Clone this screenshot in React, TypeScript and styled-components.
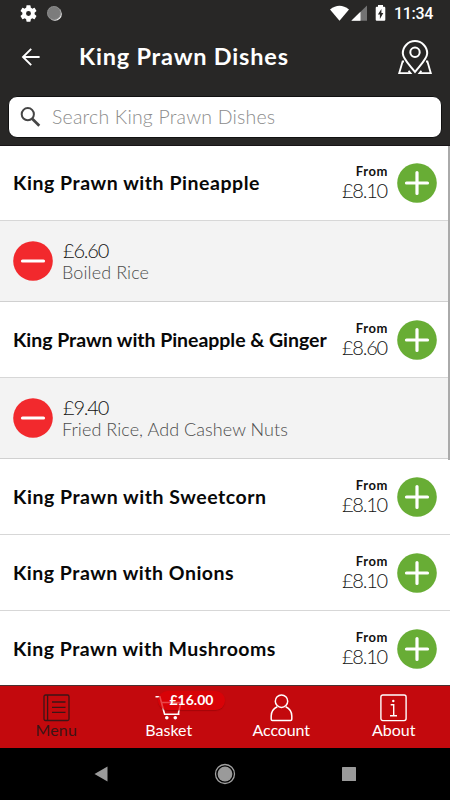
import React from "react";
import styled, { createGlobalStyle } from "styled-components";

const GlobalStyle = createGlobalStyle`
  *, *::before, *::after { box-sizing: border-box; }
  body { margin: 0; background: #000; font-family: Lato, "Open Sans", sans-serif; }
  svg { display: block; flex: none; }
`;

const Screen = styled.div`
  width: 450px;
  height: 800px;
  display: flex;
  flex-direction: column;
  overflow: hidden;
  background: #fff;
`;

const Header = styled.header`
  height: 146px;
  flex: none;
  background: #282726;
  border-bottom: 1px solid #181417;
  color: #fff;
`;

const StatusBar = styled.div`
  height: 27px;
  padding: 0 17px 0 20px;
  display: flex;
  align-items: center;
  justify-content: space-between;
`;

const StatusGroup = styled.div`
  display: flex;
  align-items: center;
`;

const Clock = styled.span`
  margin-left: 8px;
  padding-top: 1px;
  font: 500 16px/26px Roboto, sans-serif;
  letter-spacing: -0.3px;
`;

const TitleBar = styled.div`
  height: 60px;
  padding: 0 17px 0 21px;
  display: flex;
  align-items: center;
`;

const Title = styled.h1`
  margin: 0 auto 0 39px;
  padding-bottom: 2px;
  font-size: 23.5px;
  line-height: 30px;
  font-weight: 700;
  letter-spacing: 0.8px;
  white-space: nowrap;
`;

const SearchBox = styled.div`
  height: 42px;
  margin: 9px 8px 0;
  padding-left: 11px;
  display: flex;
  align-items: center;
  gap: 11px;
  background: #fff;
  border: 1px solid #111;
  border-radius: 9px;
`;

const Placeholder = styled.span`
  color: #8c8c8c;
  font-size: 19.5px;
  line-height: 26px;
  font-weight: 300;
  letter-spacing: 0.19px;
  white-space: nowrap;
`;

const List = styled.main`
  position: relative;
  height: 539px;
  flex: none;
  overflow: hidden;
`;

const ScrollThumb = styled.div`
  position: absolute;
  top: 0;
  right: 0;
  width: 2px;
  height: 314px;
  background: #aaa;
`;

const DishRow = styled.div`
  height: 76px;
  padding: 0 13px;
  display: flex;
  align-items: center;
  border-bottom: 1px solid #d7d7d7;

  &:first-child {
    height: 75px;
  }
`;

const DishName = styled.span<{ $spacing: number }>`
  flex: 1;
  color: #080808;
  font-size: 19.5px;
  line-height: 26px;
  font-weight: 700;
  letter-spacing: ${(p) => p.$spacing}px;
  white-space: nowrap;
`;

const PriceColumn = styled.div`
  margin-right: 9px;
  padding-bottom: 2px;
  display: flex;
  flex-direction: column;
  align-items: flex-end;
  color: #111;
`;

const FromLabel = styled.span`
  font-size: 13px;
  line-height: 17px;
  font-weight: 700;
  letter-spacing: 0.6px;
`;

const Price = styled.span`
  font-size: 20px;
  line-height: 21px;
  font-weight: 300;
  letter-spacing: -1.2px;
  padding-right: 1px;
`;

const ChoiceRow = styled.div`
  height: 81px;
  padding: 0 13px;
  display: flex;
  align-items: center;
  gap: 10px;
  background: #f3f3f3;
  border-bottom: 1px solid #d0d0d0;
`;

const ChoiceText = styled.div`
  padding-top: 2px;
  display: flex;
  flex-direction: column;
  color: #111;
`;

const ChoiceDetail = styled.span<{ $spacing: number }>`
  margin-left: -1px;
  color: #4c4c4c;
  font-size: 18px;
  line-height: 23px;
  font-weight: 300;
  letter-spacing: ${(p) => p.$spacing}px;
  white-space: nowrap;
`;

const TabBar = styled.nav`
  height: 63px;
  flex: none;
  display: grid;
  grid-template-columns: repeat(4, 1fr);
  background: #c3090d;
  border-top: 1px solid #493030;
`;

const Tab = styled.div<{ $active?: boolean }>`
  position: relative;
  padding-top: 8px;
  display: flex;
  flex-direction: column;
  align-items: center;
  color: ${(p) => (p.$active ? "#3c1516" : "#fff")};
`;

const TabLabel = styled.span<{ $spacing: number }>`
  margin-top: -1px;
  font-size: 16px;
  line-height: 18px;
  font-weight: 400;
  letter-spacing: ${(p) => p.$spacing}px;
`;

const BasketBadge = styled.span`
  position: absolute;
  top: 5px;
  left: 45px;
  width: 67px;
  height: 19px;
  padding-left: 12px;
  border-radius: 10px;
  background: rgba(224, 0, 5, 0.72);
  box-shadow: 0 1px 1px rgba(120, 0, 0, 0.4);
  color: #fff;
  font-size: 14px;
  line-height: 18px;
  font-weight: 700;
`;

const SystemBar = styled.div`
  height: 52px;
  flex: none;
  display: grid;
  grid-template-columns: 124px 124px 124px;
  justify-content: center;
  align-items: center;
  justify-items: center;
  background: #000;
`;

const PlusIcon = () => (
  <svg width="40" height="40" viewBox="0 0 40 40">
    <circle cx="20" cy="20" r="19.8" fill="#68ad35" />
    <path d="M20 9.5v21M9.5 20h21" stroke="#fff" strokeWidth="3.2" strokeLinecap="round" />
  </svg>
);

const MinusIcon = () => (
  <svg width="40" height="40" viewBox="0 0 40 40">
    <circle cx="20" cy="20" r="19.8" fill="#f2292d" />
    <path d="M9.5 20h21" stroke="#fff" strokeWidth="3.2" strokeLinecap="round" />
  </svg>
);

const GearIcon = () => (
  <svg width="17" height="17" viewBox="3 2 18 20">
    <path
      fill="#fff"
      d="M19.14 12.94c.04-.3.06-.61.06-.94 0-.32-.02-.64-.07-.94l2.03-1.58a.49.49 0 0 0 .12-.61l-1.92-3.32a.49.49 0 0 0-.59-.22l-2.39.96c-.5-.38-1.03-.7-1.62-.94l-.36-2.54a.48.48 0 0 0-.48-.41h-3.84c-.24 0-.43.17-.47.41l-.36 2.54c-.59.24-1.13.57-1.62.94l-2.39-.96a.48.48 0 0 0-.59.22L2.74 8.87a.48.48 0 0 0 .12.61l2.03 1.58c-.05.3-.09.63-.09.94s.02.64.07.94l-2.03 1.58a.49.49 0 0 0-.12.61l1.92 3.32c.12.22.37.29.59.22l2.39-.96c.5.38 1.03.7 1.62.94l.36 2.54c.05.24.24.41.48.41h3.84c.24 0 .44-.17.47-.41l.36-2.54c.59-.24 1.13-.56 1.62-.94l2.39.96c.22.08.47 0 .59-.22l1.92-3.32a.47.47 0 0 0-.12-.61l-2.01-1.58zM12 14.9a2.9 2.9 0 1 1 0-5.8 2.9 2.9 0 0 1 0 5.8z"
    />
  </svg>
);

const SyncDotDrawing = styled.svg`
  margin-left: 9px;
`;

const SyncDot = () => (
  <SyncDotDrawing width="17" height="17" viewBox="0 0 17 17">
    <circle cx="9" cy="9" r="6.8" fill="#eee" />
    <circle cx="8" cy="8" r="7" fill="#7c7c7c" />
    <circle cx="8" cy="8" r="6.4" fill="none" stroke="#999" strokeWidth="1" strokeDasharray="1 1" />
  </SyncDotDrawing>
);

const SignalIcons = () => (
  <svg width="56" height="17" viewBox="0 0 56 17">
    <path d="M0 4.5Q9.5-3 19 4.5L9.5 15.8z" fill="#fff" />
    <path d="M37 .5V15.8H21.3z" fill="#737373" />
    <path d="M30.5 6.8v9h-9.2z" fill="#fff" />
    <path
      fill="#fff"
      fillRule="evenodd"
      d="M48 0h5v1.8h1.2q1.1 0 1.1 1.1v11.8q0 1.1-1.1 1.1h-7.4q-1.1 0-1.1-1.1V2.9q0-1.1 1.1-1.1H48zM51.4 4l-3.5 5.4h2V14l3.4-6h-1.9z"
    />
  </svg>
);

const BackIcon = () => (
  <svg width="19" height="18" viewBox="0 0 19 18" fill="none" stroke="#fff" strokeWidth="1.9">
    <path d="M18.6 9H2M10.2.8L2 9l8.2 8.2" />
  </svg>
);

const MapPinIcon = () => (
  <svg width="36" height="36" viewBox="0 0 36 36" fill="none" stroke="#fff" strokeWidth="2">
    <path d="M18 33C12.5 26 5.8 19.8 5.8 14.3a12.2 12.2 0 0 1 24.4 0c0 5.5-6.7 11.7-12.2 18.7z" />
    <circle cx="18" cy="13.2" r="4.7" />
    <path d="M7 22.5H5.6L2.2 34.2H13.5L11.6 31.8M29 22.5h1.400l3.400 11.700H22.500l1.900-2.400" strokeWidth="1.8" />
  </svg>
);

const SearchIcon = () => (
  <svg width="21" height="21" viewBox="0 0 21 21" fill="none" stroke="#454545">
    <circle cx="7.8" cy="7.2" r="6.1" strokeWidth="2" />
    <path d="M12.2 11.7l7.1 7.1" strokeWidth="2.7" />
  </svg>
);

const MenuIcon = () => (
  <svg width="27" height="28" viewBox="0 0 27 28" fill="none" stroke="currentColor" strokeWidth="1.3">
    <rect x="1" y="1" width="25" height="25.5" rx="1.5" />
    <path d="M4.6 1v25.5M9 8h13.5M9 13.3h13.5M9 18.3h13.5" />
  </svg>
);

const CartIcon = () => (
  <svg width="28" height="28" viewBox="0 0 28 28" fill="none" stroke="#fff" strokeWidth="1.6">
    <path d="M.5 2.8h4.4l4.7 17.5h14.9M6.5 8.5h19.5L23.8 17.300l-.5 3" />
    <circle cx="11.8" cy="23.8" r="1.8" fill="#fff" stroke="none" />
    <circle cx="20.3" cy="23.8" r="1.8" fill="#fff" stroke="none" />
  </svg>
);

const PersonIcon = () => (
  <svg width="23" height="28" viewBox="0 0 23 28" fill="none" stroke="#fff" strokeWidth="1.5">
    <circle cx="11.5" cy="7.2" r="6.2" />
    <path d="M7.3 12.700C3.500 14.500 1.200 18 1.200 22v3.300q0 1.200 1.200 1.200h18.200q1.200 0 1.200-1.200V22c0-4-2.300-7.500-6.100-9.300" />
  </svg>
);

const InfoIcon = () => (
  <svg width="27" height="28" viewBox="0 0 27 28" fill="none" stroke="#fff" strokeWidth="1.4">
    <rect x=".9" y="1" width="25.2" height="25.6" rx="2" />
    <path d="M10.700 10.700h3v11.100M10 21.800h7" />
    <circle cx="13.300" cy="7" r="1.200" fill="#fff" stroke="none" />
  </svg>
);

interface Dish {
  name: string;
  price: string;
  spacing: number;
  choice?: { price: string; detail: string; spacing: number };
}

const dishes: Dish[] = [
  { name: "King Prawn with Pineapple", price: "£8.10", spacing: 0.54, choice: { price: "£6.60", detail: "Boiled Rice", spacing: 0.1 } },
  { name: "King Prawn with Pineapple & Ginger", price: "£8.60", spacing: -0.04, choice: { price: "£9.40", detail: "Fried Rice, Add Cashew Nuts", spacing: 0.07 } },
  { name: "King Prawn with Sweetcorn", price: "£8.10", spacing: 0.53 },
  { name: "King Prawn with Onions", price: "£8.10", spacing: 0.5 },
  { name: "King Prawn with Mushrooms", price: "£8.10", spacing: 0.48 },
];

export default function App() {
  return (
    <Screen>
      <GlobalStyle />
      <Header>
        <StatusBar>
          <StatusGroup>
            <GearIcon />
            <SyncDot />
          </StatusGroup>
          <StatusGroup>
            <SignalIcons />
            <Clock>11:34</Clock>
          </StatusGroup>
        </StatusBar>
        <TitleBar>
          <BackIcon />
          <Title>King Prawn Dishes</Title>
          <MapPinIcon />
        </TitleBar>
        <SearchBox>
          <SearchIcon />
          <Placeholder>Search King Prawn Dishes</Placeholder>
        </SearchBox>
      </Header>
      <List>
        {dishes.map((dish) => (
          <React.Fragment key={dish.name}>
            <DishRow>
              <DishName $spacing={dish.spacing}>{dish.name}</DishName>
              <PriceColumn>
                <FromLabel>From</FromLabel>
                <Price>{dish.price}</Price>
              </PriceColumn>
              <PlusIcon />
            </DishRow>
            {dish.choice && (
              <ChoiceRow>
                <MinusIcon />
                <ChoiceText>
                  <Price>{dish.choice.price}</Price>
                  <ChoiceDetail $spacing={dish.choice.spacing}>{dish.choice.detail}</ChoiceDetail>
                </ChoiceText>
              </ChoiceRow>
            )}
          </React.Fragment>
        ))}
        <ScrollThumb />
      </List>
      <TabBar>
        <Tab $active>
          <MenuIcon />
          <TabLabel $spacing={0.1}>Menu</TabLabel>
        </Tab>
        <Tab>
          <CartIcon />
          <BasketBadge>£16.00</BasketBadge>
          <TabLabel $spacing={0}>Basket</TabLabel>
        </Tab>
        <Tab>
          <PersonIcon />
          <TabLabel $spacing={-0.1}>Account</TabLabel>
        </Tab>
        <Tab>
          <InfoIcon />
          <TabLabel $spacing={0}>About</TabLabel>
        </Tab>
      </TabBar>
      <SystemBar>
        <svg width="14" height="16" viewBox="0 0 14 16">
          <path d="M13.5.5v15L.5 8z" fill="#9a9a9a" />
        </svg>
        <svg width="22" height="22" viewBox="0 0 22 22">
          <circle cx="11" cy="11" r="9.5" fill="none" stroke="#a0a0a0" strokeWidth="1.3" />
          <circle cx="11" cy="11" r="7.4" fill="#9a9a9a" />
        </svg>
        <svg width="14" height="14" viewBox="0 0 14 14">
          <rect width="14" height="14" rx=".5" fill="#9a9a9a" />
        </svg>
      </SystemBar>
    </Screen>
  );
}
